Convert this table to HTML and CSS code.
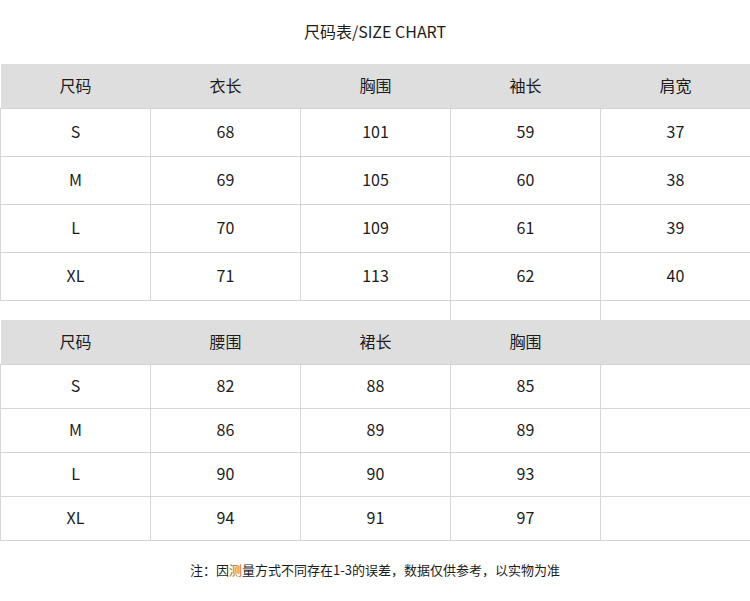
FILE: index.html
```html
<!DOCTYPE html>
<html lang="zh">
<head>
<meta charset="utf-8">
<link rel="stylesheet" href="styles.css">
</head>
<body>
<div class="page">
  <h1 class="title">尺码表/SIZE CHART</h1>
  <table class="chart chart-top">
    <tr class="head"><th>尺码</th><th>衣长</th><th>胸围</th><th>袖长</th><th>肩宽</th></tr>
    <tr><td>S</td><td>68</td><td>101</td><td>59</td><td>37</td></tr>
    <tr><td>M</td><td>69</td><td>105</td><td>60</td><td>38</td></tr>
    <tr><td>L</td><td>70</td><td>109</td><td>61</td><td>39</td></tr>
    <tr><td>XL</td><td>71</td><td>113</td><td>62</td><td>40</td></tr>
    <tr class="spacer"><td class="blank"></td><td class="blank"></td><td class="blank"></td><td></td><td></td></tr>
  </table>
  <table class="chart chart-bottom">
    <tr class="head"><th>尺码</th><th>腰围</th><th>裙长</th><th>胸围</th><th></th></tr>
    <tr><td>S</td><td>82</td><td>88</td><td>85</td><td></td></tr>
    <tr><td>M</td><td>86</td><td>89</td><td>89</td><td></td></tr>
    <tr><td>L</td><td>90</td><td>90</td><td>93</td><td></td></tr>
    <tr><td>XL</td><td>94</td><td>91</td><td>97</td><td></td></tr>
  </table>
  <p class="note">注：因<span class="accent">测</span>量方式不同存在1-3的误差，数据仅供参考，以实物为准</p>
</div>
</body>
</html>
```
FILE: styles.css
```css
html, body {
  margin: 0;
  padding: 0;
  background: #ffffff;
}
body {
  font-family: "Noto Sans CJK SC", "Noto Sans", "Open Sans", sans-serif;
  color: #1c1c1c;
}
.page {
  width: 750px;
}
.title {
  margin: 0;
  height: 64px;
  line-height: 62px;
  font-size: 16px;
  font-weight: 400;
  text-align: center;
}
.chart {
  width: 750px;
  border-collapse: collapse;
  table-layout: fixed;
}
.chart th, .chart td {
  width: 150px;
  padding: 0;
  text-align: center;
  font-size: 16px;
  font-weight: 400;
}
.chart .head th {
  background: #dedede;
  height: 41px;
  padding-bottom: 3px;
  border: none;
}
.chart td {
  border: 1px solid #d6d6d6;
  padding-bottom: 3px;
}
.chart-top td {
  height: 44px;
}
.chart-top .spacer td {
  height: 19px;
  padding-bottom: 0;
  border-bottom: none;
}
.chart-top .spacer td.blank {
  border-left: none;
  border-right: none;
}
.chart-bottom td {
  height: 40px;
}
.note {
  margin: 0;
  padding-top: 20px;
  font-size: 13px;
  line-height: 18px;
  text-align: center;
}
.accent {
  color: #b5651d;
}
```
